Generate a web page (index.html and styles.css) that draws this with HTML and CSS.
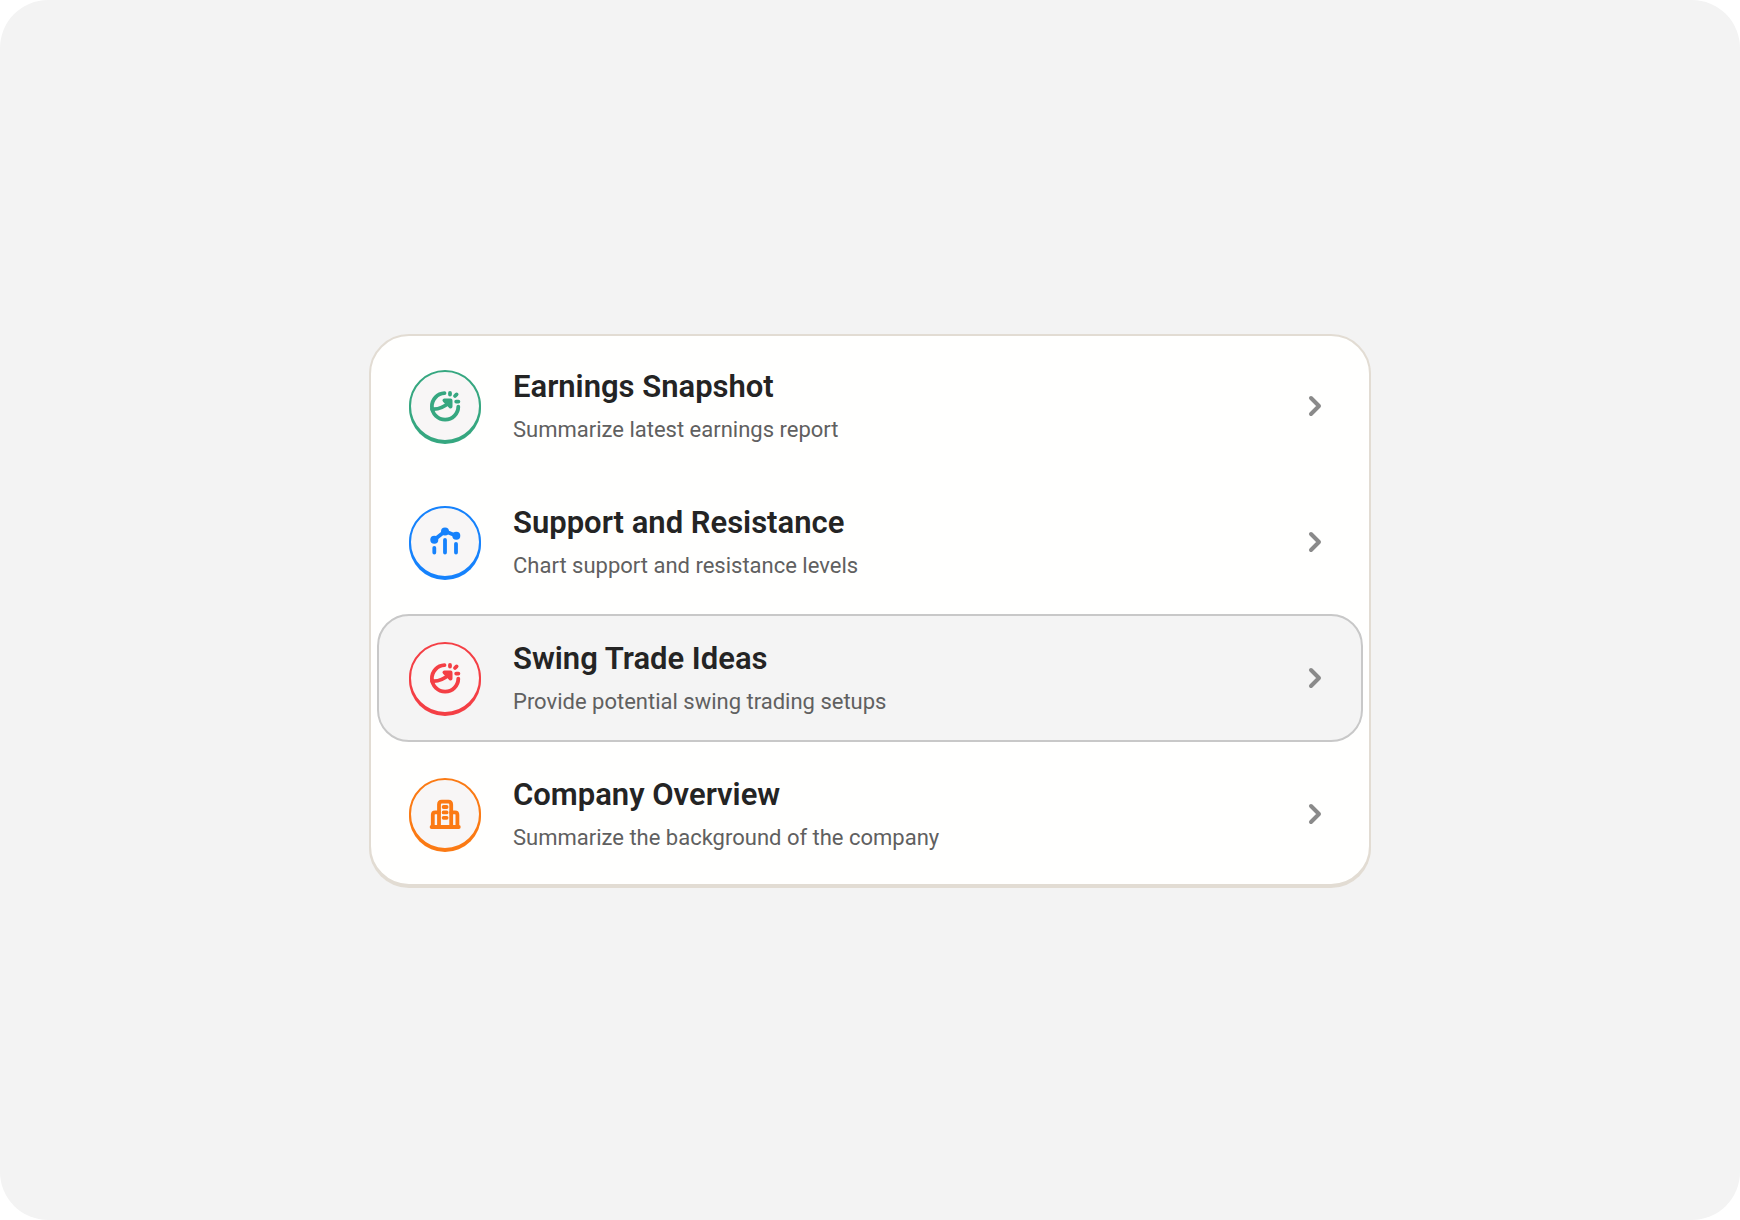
FILE: index.html
```
<!DOCTYPE html>
<html lang="en">
<head>
  <meta charset="UTF-8" />
  <meta name="viewport" content="width=device-width, initial-scale=1.0"/>
  <title>Prompt ideas</title>
  <link rel="stylesheet" href="styles.css">
</head>
<body>
  <svg class="sprite" aria-hidden="true">
    <symbol id="icon-growth" viewBox="0 0 36 36">
      <path d="M17.5 5.2A13.2 13.2 0 1 0 31.3 18.6" />
      <path d="M5 21C11 21.6 17 19 22 14.6" />
      <path class="fill" d="M17.4 12.4H23.6V18.6Z" />
      <path d="M23 5V6.6M28 8L29.6 6.4M29.2 13.6H31.4" />
    </symbol>
    <symbol id="icon-chart" viewBox="0 0 36 36">
      <path d="M7.3 15.7L18 7.3L29.3 11.7" />
      <circle class="dot" cx="7.3" cy="15.7" r="4" />
      <circle class="dot" cx="18" cy="7.6" r="4" />
      <circle class="dot" cx="29.3" cy="11.7" r="4" />
      <path d="M7.3 23.8V28.6M18 16V28.6M29 19.8V28.6" />
    </symbol>
    <symbol id="icon-building" viewBox="0 0 36 36">
      <path d="M4.6 31H31.8" />
      <path d="M12 31V8.4Q12 5.6 14.8 5.6H21.4Q24.2 5.6 24.2 8.4V31" />
      <path d="M5.8 31V18.8Q5.8 16.4 8.2 16.4H12M30.4 31V18.8Q30.4 16.4 28 16.4H24.2" />
      <path d="M16.6 11H19.6M16.6 16.4H19.6M16.6 21.8H19.6" />
    </symbol>
    <symbol id="icon-chevron" viewBox="0 0 16 24">
      <path d="M4 4L12 12L4 20" />
    </symbol>
  </svg>

  <main class="page">
    <div class="card">
      <button type="button" class="item green">
        <span class="badge"><svg><use href="#icon-growth" /></svg></span>
        <span class="text">
          <span class="title">Earnings Snapshot</span>
          <span class="subtitle">Summarize latest earnings report</span>
        </span>
        <svg class="chevron"><use href="#icon-chevron" /></svg>
      </button>
      <button type="button" class="item blue">
        <span class="badge"><svg><use href="#icon-chart" /></svg></span>
        <span class="text">
          <span class="title">Support and Resistance</span>
          <span class="subtitle">Chart support and resistance levels</span>
        </span>
        <svg class="chevron"><use href="#icon-chevron" /></svg>
      </button>
      <button type="button" class="item red active">
        <span class="badge"><svg><use href="#icon-growth" /></svg></span>
        <span class="text">
          <span class="title">Swing Trade Ideas</span>
          <span class="subtitle">Provide potential swing trading setups</span>
        </span>
        <svg class="chevron"><use href="#icon-chevron" /></svg>
      </button>
      <button type="button" class="item orange">
        <span class="badge"><svg><use href="#icon-building" /></svg></span>
        <span class="text">
          <span class="title">Company Overview</span>
          <span class="subtitle">Summarize the background of the company</span>
        </span>
        <svg class="chevron"><use href="#icon-chevron" /></svg>
      </button>
    </div>
  </main>
</body>
</html>
```
FILE: styles.css
```
* {
  box-sizing: border-box;
  margin: 0;
  padding: 0;
}

body {
  font-family: Roboto, "Liberation Sans", sans-serif;
  background-color: #ffffff;
  color: #242424;
}

.sprite {
  display: none;
}

.page {
  display: flex;
  align-items: center;
  justify-content: center;
  min-height: 100vh;
  padding: 24px;
  background-color: #f3f3f3;
  border-radius: 48px;
}

.card {
  display: flex;
  flex-direction: column;
  gap: 8px;
  width: 100%;
  max-width: 1002px;
  padding: 6px;
  background-color: #fffffe;
  border: 2px solid #e2dcd3;
  border-radius: 40px;
  box-shadow: 0 2px 0 #e2dcd3;
}

.item {
  display: flex;
  align-items: center;
  gap: 32px;
  width: 100%;
  padding: 24px 30px;
  border: 2px solid transparent;
  border-radius: 32px;
  background: none;
  color: inherit;
  font: inherit;
  text-align: left;
  cursor: pointer;
}

.item:hover,
.item.active {
  background-color: #f4f4f4;
  border-color: #c8c8c8;
}

.badge {
  display: flex;
  align-items: center;
  justify-content: center;
  flex-shrink: 0;
  width: 72px;
  height: 72px;
  border: 2px solid currentColor;
  border-radius: 50%;
  background-color: #f8f6f6;
  box-shadow: 0 2px 0 currentColor;
}

.badge svg {
  width: 36px;
  height: 36px;
}

svg {
  fill: none;
  stroke: currentColor;
  stroke-width: 3.8;
  stroke-linecap: round;
  stroke-linejoin: round;
}

.fill {
  fill: currentColor;
}

.dot {
  fill: currentColor;
  stroke: none;
}

.green .badge {
  color: #36a780;
}

.blue .badge {
  color: #1682fc;
}

.red .badge {
  color: #f43f45;
}

.orange .badge {
  color: #fb7a14;
}

.text {
  display: flex;
  flex-direction: column;
  flex: 1;
  gap: 10px;
}

.title {
  font-size: 31px;
  font-weight: 600;
  line-height: 38px;
}

.subtitle {
  font-size: 22px;
  line-height: 28px;
  color: #606060;
}

.chevron {
  flex-shrink: 0;
  width: 16px;
  height: 24px;
  margin-right: 8px;
  color: #8a8a8a;
  stroke-width: 4;
}
```
